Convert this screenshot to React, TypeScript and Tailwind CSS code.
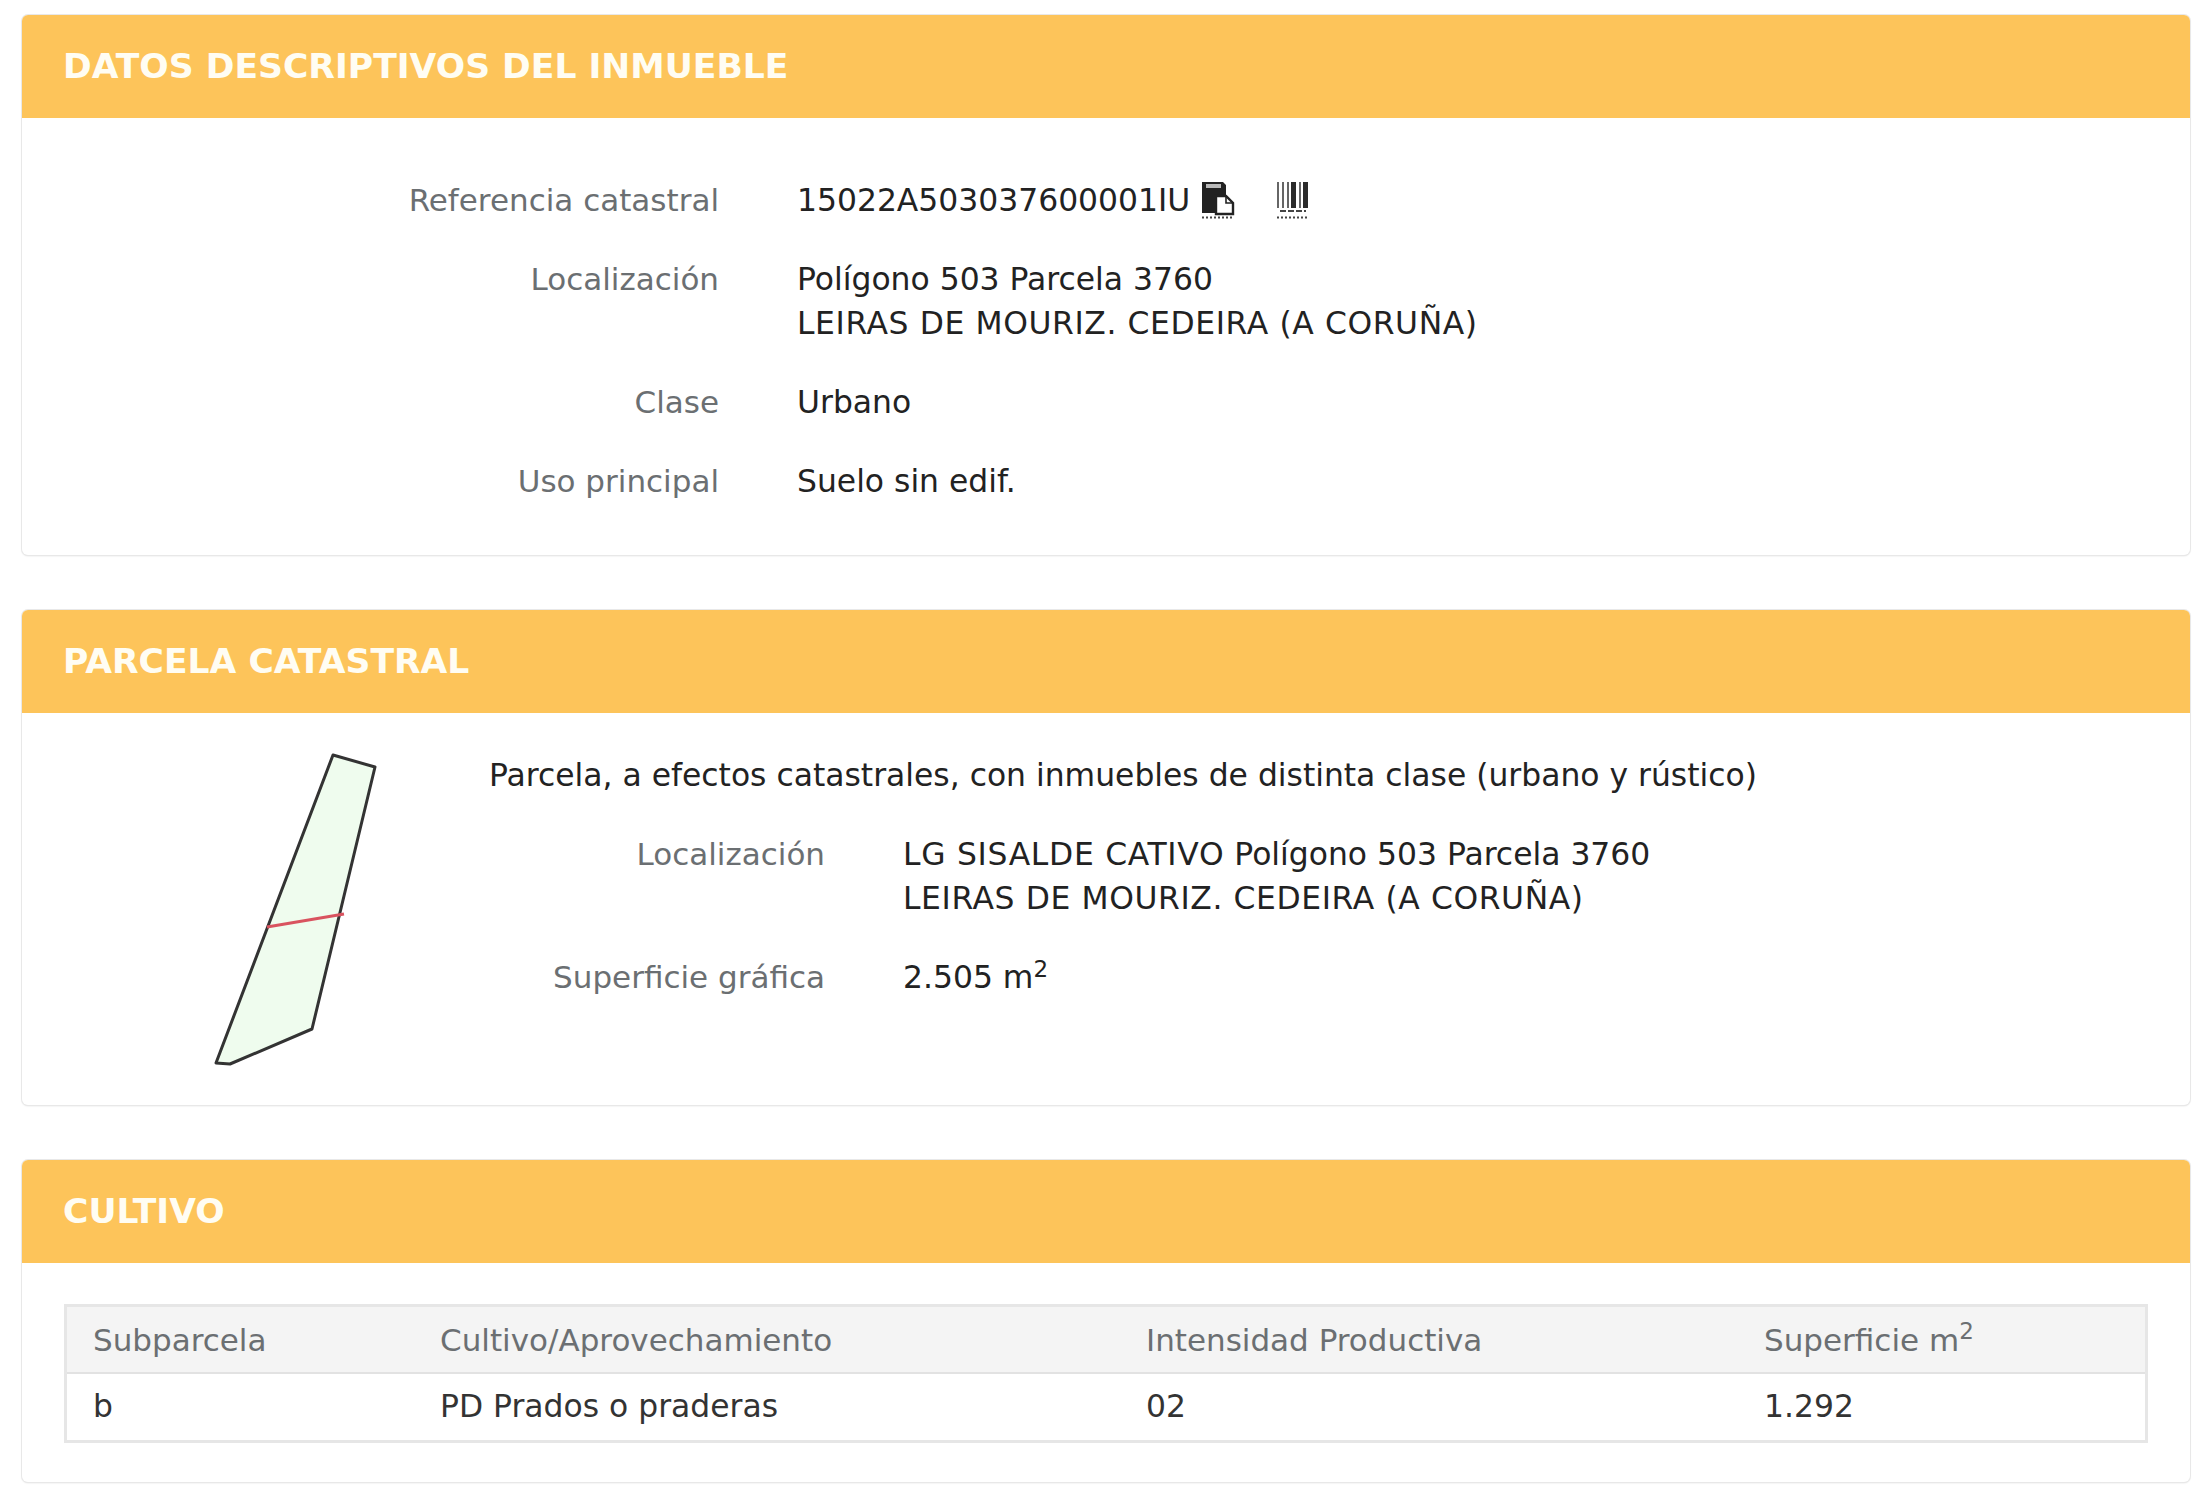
function Header({ title }: { title: string }) {
  return (
    <div className="flex h-[103px] items-center rounded-t-[6px] bg-[#fdc45a] pl-[41px]">
      <h2 className="text-[34.6px] leading-none font-bold text-[#fffdf3]">{title}</h2>
    </div>
  );
}

function Card({ title, className, children }: { title: string; className: string; children: React.ReactNode }) {
  return (
    <section className={`rounded-[6px] bg-white shadow-[0_0_0_1px_#e8e8e8,0_1px_2px_#dddddd] ${className}`}>
      <Header title={title} />
      {children}
    </section>
  );
}

function Row({ label, labelWidth, children }: { label: string; labelWidth: string; children: React.ReactNode }) {
  return (
    <div className="flex gap-[78px] pb-[35px]">
      <div className={`${labelWidth} shrink-0 text-right text-[31px] text-[#6b6f72]`}>{label}</div>
      <div className="text-[#222222]">{children}</div>
    </div>
  );
}

function CopyIcon() {
  return (
    <svg width="34" height="38" viewBox="0 0 34 38" className="ml-[11px]">
      <path d="M1 1h21l3 3v12h-8v16H1z" fill="#222222" />
      <rect x="5" y="3" width="15" height="4" fill="#b9b9b9" />
      <path d="M15 15h10l7 7v11H15z" fill="#ffffff" stroke="#222222" strokeWidth="2.4" />
      <path d="M25 15v7h7" fill="none" stroke="#222222" strokeWidth="1.6" />
      <line x1="1" y1="36.5" x2="33" y2="36.5" stroke="#444444" strokeWidth="2" strokeDasharray="2 2" />
    </svg>
  );
}

function BarcodeIcon() {
  return (
    <svg width="34" height="38" viewBox="0 0 34 38" className="ml-[41px]">
      <g fill="#2b2b2b">
        <rect x="1" y="1" width="2" height="26" fill="#666666" />
        <rect x="6" y="1" width="2" height="26" fill="#666666" />
        <rect x="11" y="1" width="2" height="26" fill="#666666" />
        <rect x="15" y="1" width="5" height="26" />
        <rect x="23" y="1" width="2" height="26" fill="#666666" />
        <rect x="27" y="1" width="5" height="26" />
      </g>
      <line x1="4" y1="30" x2="30" y2="30" stroke="#444444" strokeWidth="2" strokeDasharray="6 2" />
      <line x1="1" y1="36.5" x2="33" y2="36.5" stroke="#444444" strokeWidth="2" strokeDasharray="2 2" />
    </svg>
  );
}

function ParcelMap() {
  return (
    <svg width="170" height="322" viewBox="0 0 170 322" className="shrink-0">
      <polygon points="119,2 161,14 98,276 16,311 2,310" fill="#effcee" stroke="#333333" strokeWidth="3" strokeLinejoin="round" />
      <line x1="53" y1="174" x2="130" y2="161" stroke="#d9535f" strokeWidth="3" />
    </svg>
  );
}

const columns = ["w-[347px]", "w-[706px]", "w-[618px]", "flex-1"];

export default function App() {
  return (
    <div className="h-[1500px] bg-white pt-[15px] pr-[16px] pl-[22px] font-['DejaVu_Sans',sans-serif] text-[31.4px] leading-[44px]">
      <Card title="DATOS DESCRIPTIVOS DEL INMUEBLE" className="h-[540px]">
        <div className="pt-[60px]">
          <Row label="Referencia catastral" labelWidth="w-[697px]">
            <div className="flex items-center">
              15022A503037600001IU
              <CopyIcon />
              <BarcodeIcon />
            </div>
          </Row>
          <Row label="Localización" labelWidth="w-[697px]">
            Polígono 503 Parcela 3760
            <br />
            <span className="tracking-[0.6px]">LEIRAS DE MOURIZ. CEDEIRA (A CORUÑA)</span>
          </Row>
          <Row label="Clase" labelWidth="w-[697px]">Urbano</Row>
          <Row label="Uso principal" labelWidth="w-[697px]">Suelo sin edif.</Row>
        </div>
      </Card>

      <Card title="PARCELA CATASTRAL" className="mt-[55px] h-[495px]">
        <div className="flex pt-[40px] pl-[192px]">
          <ParcelMap />
          <div className="pl-[105px]">
            <p className="pb-[35px] text-[#222222]">
              Parcela, a efectos catastrales, con inmuebles de distinta clase (urbano y rústico)
            </p>
            <Row label="Localización" labelWidth="w-[336px]">
              <span className="tracking-[0.7px]">LG SISALDE CATIVO</span> Polígono 503 Parcela 3760
              <br />
              <span className="tracking-[0.6px]">LEIRAS DE MOURIZ. CEDEIRA (A CORUÑA)</span>
            </Row>
            <Row label="Superficie gráfica" labelWidth="w-[336px]">
              2.505 m<sup className="text-[23px]">2</sup>
            </Row>
          </div>
        </div>
      </Card>

      <Card title="CULTIVO" className="mt-[55px] h-[322px]">
        <div className="px-[42px] pt-[41px]">
          <div className="border-[3px] border-[#e6e6e6]">
            <div className="flex h-[67px] items-center border-b-[2px] border-[#e2e2e2] bg-[#f4f4f4] pl-[26px] text-[31px] text-[#6b6f72]">
              <div className={columns[0]}>Subparcela</div>
              <div className={columns[1]}>Cultivo/Aprovechamiento</div>
              <div className={columns[2]}>Intensidad Productiva</div>
              <div className={columns[3]}>
                Superficie m<sup className="text-[23px]">2</sup>
              </div>
            </div>
            <div className="flex h-[66px] items-center pb-[2px] pl-[26px] text-[#333333]">
              <div className={columns[0]}>b</div>
              <div className={columns[1]}>PD Prados o praderas</div>
              <div className={columns[2]}>02</div>
              <div className={columns[3]}>1.292</div>
            </div>
          </div>
        </div>
      </Card>
    </div>
  );
}
